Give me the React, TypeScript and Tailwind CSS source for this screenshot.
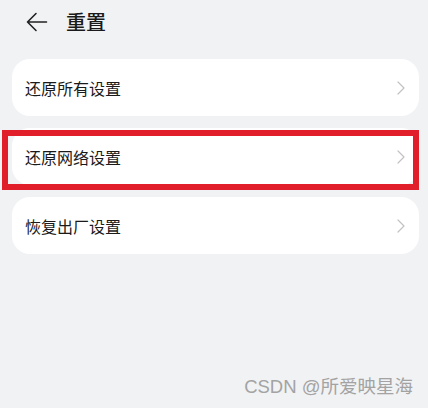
import React from "react";

const font = { fontFamily: '"Noto Sans CJK SC", "Noto Sans", sans-serif' };

function Chevron() {
  return (
    <svg width="8" height="14" viewBox="0 0 8 14" fill="none" className="shrink-0">
      <path d="M1 1l6 6-6 6" stroke="#c2c2c4" strokeWidth="1.2" strokeLinecap="round" strokeLinejoin="round" />
    </svg>
  );
}

function Row({ label }: { label: string }) {
  return (
    <div className="flex h-[57px] items-center justify-between rounded-[18px] bg-white pl-[13px] pr-[14px]">
      <span className="text-[16px] leading-none text-[#1a1a1a]" style={font}>{label}</span>
      <Chevron />
    </div>
  );
}

export default function App() {
  return (
    <div className="relative flex h-[408px] w-[428px] flex-col bg-[#f1f2f4]" style={font}>
      <div className="flex h-[44px] items-center pl-[26px]">
        <svg width="22" height="20" viewBox="0 0 22 20" fill="none">
          <path d="M1.5 10h19M10 1.5L1.5 10 10 18.5" stroke="#222" strokeWidth="1.6" strokeLinecap="round" strokeLinejoin="round" />
        </svg>
        <span className="ml-[18px] text-[20px] font-medium leading-none text-[#1a1a1a]">重置</span>
      </div>
      <div className="mt-[15px] flex flex-col gap-[12px] pl-[12px] pr-[9px]">
        <Row label="还原所有设置" />
        <div className="relative">
          <Row label="还原网络设置" />
          <div className="pointer-events-none absolute left-[-10px] right-0 top-[2px] h-[60px] border-[6px] border-[#e01f2a]" />
        </div>
        <Row label="恢复出厂设置" />
      </div>
      <div className="mt-auto flex justify-end pb-[7px] pr-[15px]">
        <span className="text-[18.5px] leading-[28px] text-[#a3a3a3]" style={{ fontFamily: '"Liberation Sans", "Noto Sans CJK SC", sans-serif' }}>CSDN @所爱映星海</span>
      </div>
    </div>
  );
}
